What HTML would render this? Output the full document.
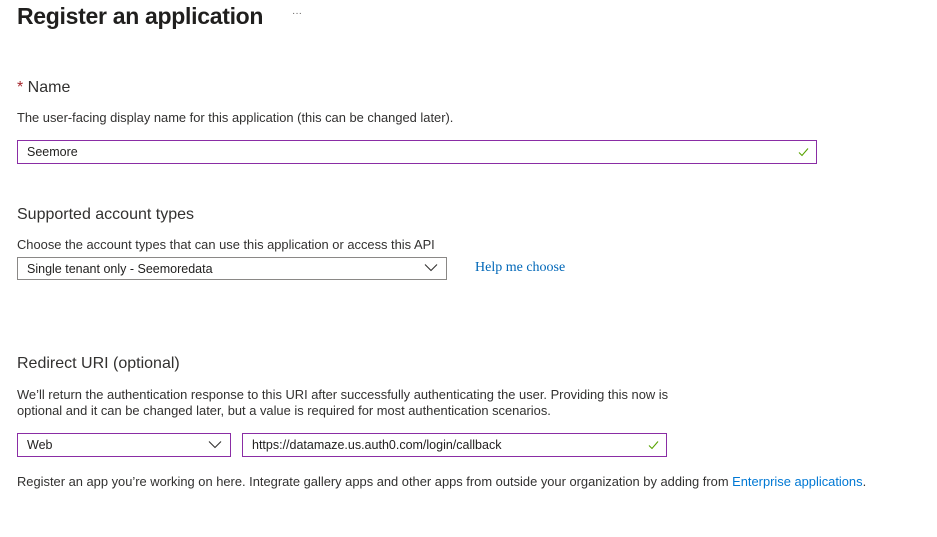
<!DOCTYPE html>
<html><head><meta charset="utf-8"><style>
body{margin:0;width:937px;height:537px;background:#fff;font-family:"Liberation Sans",sans-serif;color:#323130;position:relative;overflow:hidden}
.a{position:absolute;white-space:nowrap}
h1{position:absolute;left:17px;top:3px;margin:0;font-size:23px;font-weight:bold;color:#201f1e;letter-spacing:-0.3px}
.lbl{font-size:16px;color:#323130}
.d{font-size:12.9px;color:#323130}
.box{position:absolute;box-sizing:border-box;border:1px solid #8a2da5;font-size:12.5px;padding-left:9px;display:flex;align-items:center;color:#201f1e}
.chev{position:absolute;right:8px;top:5px}
.chk{position:absolute;right:7px;top:6px}
a{color:#0078d4;text-decoration:none}
</style></head><body>
<h1>Register an application</h1>
<div class="a" style="left:292px;top:8px;font-size:10px;color:#605e5c">···</div>
<div class="a lbl" style="left:17px;top:79px"><span style="color:#a4262c">*</span> Name</div>
<div class="a d" style="left:17px;top:110px">The user-facing display name for this application (this can be changed later).</div>
<div class="box" style="left:17px;top:140px;width:800px;height:24px">Seemore
<svg class="chk" width="11" height="10" viewBox="0 0 11 10"><path d="M1 5.5l3 3L10 1.5" stroke="#57a300" stroke-width="1.1" fill="none"/></svg></div>
<div class="a lbl" style="left:17px;top:206px">Supported account types</div>
<div class="a d" style="left:17px;top:237px">Choose the account types that can use this application or access this API</div>
<div class="box" style="left:17px;top:257px;width:430px;height:23px;border-color:#8a8886">Single tenant only - Seemoredata
<svg class="chev" width="14" height="9" viewBox="0 0 14 9"><path d="M1 1.5l6 6 6-6" stroke="#323130" stroke-width="1.1" fill="none"/></svg></div>
<div class="a" style="left:475px;top:260px;font-family:'Liberation Serif',serif;font-size:14px;color:#0067b8">Help me choose</div>
<div class="a lbl" style="left:17px;top:355px">Redirect URI (optional)</div>
<div class="a d" style="left:17px;top:387px;line-height:16px">We’ll return the authentication response to this URI after successfully authenticating the user. Providing this now is<br>optional and it can be changed later, but a value is required for most authentication scenarios.</div>
<div class="box" style="left:17px;top:433px;width:214px;height:24px">Web
<svg class="chev" width="14" height="9" viewBox="0 0 14 9" style="top:6px"><path d="M1 1.5l6 6 6-6" stroke="#323130" stroke-width="1.1" fill="none"/></svg></div>
<div class="box" style="left:242px;top:433px;width:425px;height:24px">https://datamaze.us.auth0.com/login/callback
<svg class="chk" width="11" height="10" viewBox="0 0 11 10"><path d="M1 5.5l3 3L10 1.5" stroke="#57a300" stroke-width="1.1" fill="none"/></svg></div>
<div class="a d" style="left:17px;top:474px">Register an app you’re working on here. Integrate gallery apps and other apps from outside your organization by adding from <a>Enterprise applications</a>.</div>
</body></html>
